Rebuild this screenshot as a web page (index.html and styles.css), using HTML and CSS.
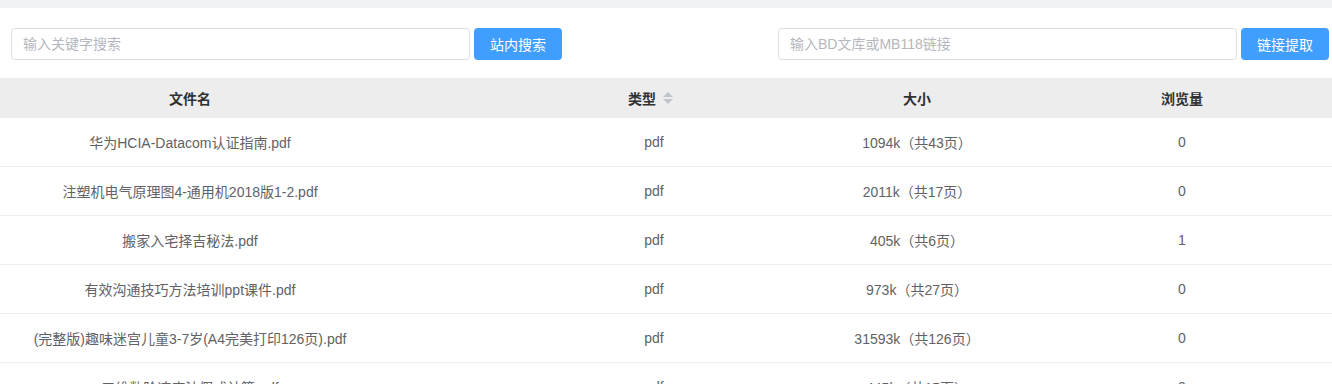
FILE: index.html
```html
<!DOCTYPE html>
<html lang="zh-CN">
<head>
<meta charset="utf-8">
<title>文档</title>
<link rel="stylesheet" href="styles.css">
</head>
<body>
<div class="topbar"></div>
<div class="search-row">
  <div class="group">
    <input class="field" type="text" placeholder="输入关键字搜索">
    <button class="btn">站内搜索</button>
  </div>
  <div class="group">
    <input class="field" type="text" placeholder="输入BD文库或MB118链接">
    <button class="btn">链接提取</button>
  </div>
</div>
<div class="table">
  <div class="row head">
    <div class="cell c1">文件名</div>
    <div class="cell c2"><span class="sortable">类型<span class="caret"><i class="up"></i><i class="down"></i></span></span></div>
    <div class="cell c3">大小</div>
    <div class="cell c4">浏览量</div>
  </div>
  <div class="row">
    <div class="cell c1">华为HCIA-Datacom认证指南.pdf</div>
    <div class="cell c2">pdf</div>
    <div class="cell c3">1094k（共43页）</div>
    <div class="cell c4">0</div>
  </div>
  <div class="row">
    <div class="cell c1">注塑机电气原理图4-通用机2018版1-2.pdf</div>
    <div class="cell c2">pdf</div>
    <div class="cell c3">2011k（共17页）</div>
    <div class="cell c4">0</div>
  </div>
  <div class="row">
    <div class="cell c1">搬家入宅择吉秘法.pdf</div>
    <div class="cell c2">pdf</div>
    <div class="cell c3">405k（共6页）</div>
    <div class="cell c4">1</div>
  </div>
  <div class="row">
    <div class="cell c1">有效沟通技巧方法培训ppt课件.pdf</div>
    <div class="cell c2">pdf</div>
    <div class="cell c3">973k（共27页）</div>
    <div class="cell c4">0</div>
  </div>
  <div class="row">
    <div class="cell c1">(完整版)趣味迷宫儿童3-7岁(A4完美打印126页).pdf</div>
    <div class="cell c2">pdf</div>
    <div class="cell c3">31593k（共126页）</div>
    <div class="cell c4">0</div>
  </div>
  <div class="row">
    <div class="cell c1">三维数阶速度法假式计算.pdf</div>
    <div class="cell c2">pdf</div>
    <div class="cell c3">445k（共15页）</div>
    <div class="cell c4">0</div>
  </div>
</div>
</body>
</html>
```

FILE: styles.css
```css
* { box-sizing: border-box; }
html, body { margin: 0; padding: 0; background: #fff; }
body {
  font-family: "Liberation Sans", "Noto Sans CJK SC", sans-serif;
  font-size: 14px;
  color: #606266;
  overflow: hidden;
}
.topbar { height: 8px; background: #f0f2f5; }
.search-row {
  display: flex;
  justify-content: space-between;
  padding: 20px 3px 0 11px;
  height: 70px;
}
.group { display: flex; gap: 4px; height: 32px; }
.field {
  width: 459px;
  height: 32px;
  border: 1px solid #dcdfe6;
  border-radius: 4px;
  padding: 0 11px;
  font-family: inherit;
  font-size: 14px;
  color: #606266;
  outline: none;
}
.field::placeholder { color: #b4b7bd; }
.btn {
  width: 88px;
  height: 32px;
  border: 0;
  border-radius: 4px;
  background: #409eff;
  color: #fff;
  font-family: inherit;
  font-size: 14px;
  padding: 0;
}
.table { display: flex; flex-direction: column; }
.row {
  display: grid;
  grid-template-columns: 520px 268px 258px 1fr;
  height: 49px;
  border-bottom: 1px solid #ebeef5;
  align-items: center;
}
.row.head {
  height: 40px;
  background: #ededed;
  border-bottom: 0;
  color: #303133;
  font-weight: bold;
}
.cell { text-align: center; white-space: nowrap; }
.c1 { padding-right: 140px; }
.c4 { padding-right: 14px; }
.sortable { display: inline-flex; align-items: center; }
.caret {
  display: inline-flex;
  flex-direction: column;
  align-items: center;
  justify-content: center;
  gap: 2px;
  width: 24px;
  height: 14px;
}
.caret i {
  display: block;
  width: 0;
  height: 0;
  border-left: 5px solid transparent;
  border-right: 5px solid transparent;
}
.caret .up { border-bottom: 5px solid #c0c4cc; }
.caret .down { border-top: 5px solid #c0c4cc; }
```
